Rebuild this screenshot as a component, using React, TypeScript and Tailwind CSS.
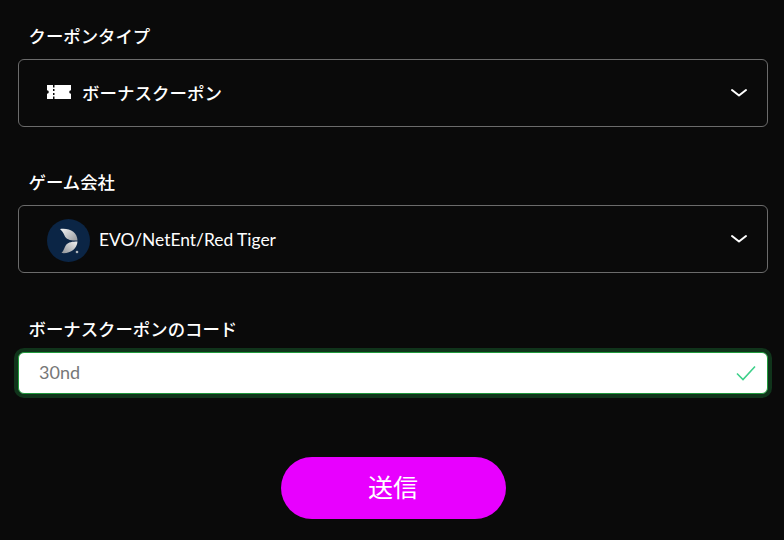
import React from "react";

function Chevron() {
  return (
    <svg width="18" height="10" viewBox="0 0 18 10" fill="none" className="shrink-0">
      <path d="M2 2 L9 7.5 L16 2" stroke="#fff" strokeWidth="2" strokeLinecap="round" strokeLinejoin="round" />
    </svg>
  );
}

function Ticket() {
  return (
    <svg width="24" height="14" viewBox="0 0 24 14" className="shrink-0">
      <path
        fill="#fff"
        fillRule="evenodd"
        d="M0 0H6V2.4H7.5V0H24V5.2A1.8 1.8 0 0 0 24 8.8V14H7.5V11.6H6V14H0V8.8A1.8 1.8 0 0 0 0 5.2ZM6 4V6H7.5V4ZM6 8V10H7.5V8Z"
      />
    </svg>
  );
}

function EvoLogo() {
  return (
    <svg width="43" height="43" viewBox="0 0 43 43" className="mt-[3px] shrink-0">
      <defs>
        <linearGradient id="evoA" x1="0" y1="0" x2="1" y2="0.7">
          <stop offset="0" stopColor="#f6f6f6" />
          <stop offset="1" stopColor="#a0a3a7" />
        </linearGradient>
        <linearGradient id="evoB" x1="1" y1="0" x2="0" y2="1">
          <stop offset="0" stopColor="#f2f2f2" />
          <stop offset="1" stopColor="#8f9397" />
        </linearGradient>
      </defs>
      <circle cx="21.5" cy="21.5" r="21.5" fill="#0b2545" />
      <path d="M13 10 C22 8.5 30.5 13 30.5 21.5 C24 22 19 20.5 17.5 16.5 C16.5 14 15 12 13 10Z" fill="url(#evoA)" />
      <path d="M30.5 22.5 C30 30 23 35 14.5 34 C17 31.5 17.5 28 19 26 C21.5 23 25.5 22.5 30.5 22.5Z" fill="url(#evoB)" />
      <circle cx="30" cy="33" r="1.3" fill="#aeb4ba" />
    </svg>
  );
}

function Select({ icon, children, gap }: { icon: React.ReactNode; children: React.ReactNode; gap: string }) {
  return (
    <div className="flex h-[68px] items-center justify-between rounded-[6px] border border-[#6b6b6b] pl-[28px] pr-[19px]">
      <div className={`flex items-center ${gap}`}>
        {icon}
        {children}
      </div>
      <Chevron />
    </div>
  );
}

function Label({ children, className }: { children: React.ReactNode; className: string }) {
  return (
    <div className={`pl-[10.5px] text-[17.4px] font-medium leading-[24px] text-white ${className}`}>{children}</div>
  );
}

export default function App() {
  return (
    <div className="flex h-[540px] w-[784px] flex-col overflow-hidden bg-[#0a0a0a] pl-[18px] pr-[16px] pt-[25px] font-['Lato','Noto_Sans_CJK_JP',sans-serif]">
      <Label className="mb-[10px]">クーポンタイプ</Label>
      <Select gap="gap-[11px]" icon={<div className="-mt-[3px] flex"><Ticket /></div>}>
        <span className="mt-[2px] text-[17.5px] font-medium leading-[24px] text-white">ボーナスクーポン</span>
      </Select>

      <Label className="mb-[10px] mt-[44px]">ゲーム会社</Label>
      <Select gap="gap-[9px]" icon={<EvoLogo />}>
        <span className="mt-[2px] text-[17.4px] leading-[24px] text-white">EVO/NetEnt/Red Tiger</span>
      </Select>

      <Label className="mb-[10px] mt-[45px]">ボーナスクーポンのコード</Label>
      <div className="flex h-[42px] items-center justify-between rounded-[6px] border border-[#1f9a3c] bg-white pl-[20px] pr-[11px] shadow-[0_0_0_4px_#10341b]">
        <span className="-mt-[2px] text-[18px] leading-[24px] text-[#777777]">30nd</span>
        <svg width="20" height="16" viewBox="0 0 20 16" fill="none" className="shrink-0">
          <path d="M1 8.5 L7 14.5 L19 1.5" stroke="#3dd08a" strokeWidth="1.6" />
        </svg>
      </div>

      <div className="mt-[63px] flex justify-center">
        <button className="h-[62px] w-[225px] rounded-[31px] bg-[#e800ff] text-[25px] text-white">送信</button>
      </div>
    </div>
  );
}
